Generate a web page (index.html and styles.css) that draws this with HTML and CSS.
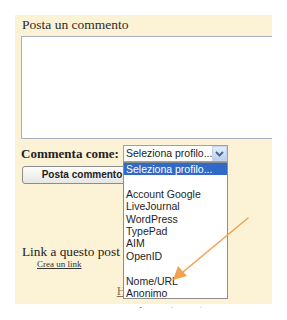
FILE: index.html
```html
<!DOCTYPE html>
<html>
<head>
<meta charset="utf-8">
<link rel="stylesheet" href="styles.css">
</head>
<body>
<div class="shot">
  <div class="panel">
    <div class="title">Posta un commento</div>
    <div class="textarea"></div>
    <div class="as-row">
      <span class="as-label">Commenta come:</span>
      <div class="select">
        <span class="select-text">Seleziona profilo...</span>
        <span class="select-btn">
          <svg width="9" height="6" viewBox="0 0 9 6"><path d="M1 1 L4.5 4.5 L8 1" fill="none" stroke="#4d6185" stroke-width="1.8"/></svg>
        </span>
      </div>
    </div>
    <div class="button">Posta commento</div>
    <div class="link-title">Link a questo post</div>
    <div class="link-create">Crea un link</div>
    <div class="home"><span>Home page</span></div>
  </div>
  <div class="subscribe">Iscriviti a: Commenti sul post (Atom)</div>

  <div class="dropdown">
    <div class="opt selected">Seleziona profilo...</div>
    <div class="opt"></div>
    <div class="opt">Account Google</div>
    <div class="opt">LiveJournal</div>
    <div class="opt">WordPress</div>
    <div class="opt">TypePad</div>
    <div class="opt">AIM</div>
    <div class="opt">OpenID</div>
    <div class="opt"></div>
    <div class="opt">Nome/URL</div>
    <div class="opt">Anonimo</div>
  </div>

  <svg class="arrow" width="90" height="80" viewBox="0 0 90 80">
    <line x1="78" y1="3" x2="13" y2="57" stroke="#f4a24f" stroke-width="1.6" stroke-linecap="round"/>
    <polygon points="3,65 8,51 17,61" fill="#f4a24f"/>
  </svg>
</div>
</body>
</html>
```
FILE: styles.css
```css
html, body {
  margin: 0;
  padding: 0;
  background: #ffffff;
}

.shot {
  position: relative;
  margin: 15px 0 0 15px;
  width: 257px;
  height: 293px;
  overflow: hidden;
}

.panel {
  background: #fcf2d6;
  height: 289px;
  padding: 0 0 0 6px;
  box-sizing: border-box;
  overflow: hidden;
  font-family: "Liberation Serif", "DejaVu Serif", serif;
  color: #2b2b2b;
}

.title {
  padding-top: 2px;
  font-size: 13.5px;
  line-height: 16px;
  padding-left: 1px;
}

.textarea {
  margin-top: 3px;
  width: 262px;
  height: 103px;
  box-sizing: border-box;
  border: 1px solid #a7b0ba;
  background: #ffffff;
}

.as-row {
  display: flex;
  align-items: center;
  margin-top: 6px;
  height: 17px;
}

.as-label {
  width: 102px;
  font-weight: bold;
  font-size: 13px;
  color: #222;
  white-space: nowrap;
  padding-top: 1px;
}

.select {
  display: flex;
  width: 105px;
  height: 17px;
  box-sizing: border-box;
  border: 1px solid #8ea5c2;
  background: #fff;
}

.select-text {
  flex: 1;
  font-family: "Liberation Sans", Arial, sans-serif;
  font-size: 10.5px;
  line-height: 15px;
  color: #222;
  padding-left: 2px;
  white-space: nowrap;
  overflow: hidden;
}

.select-btn {
  width: 15px;
  display: flex;
  align-items: center;
  justify-content: center;
  background: linear-gradient(#e4efff, #b9d0f3);
  border: 1px solid #c3d3ef;
  box-sizing: border-box;
}

.button {
  margin-top: 4px;
  margin-left: 1px;
  width: 120px;
  height: 18px;
  box-sizing: border-box;
  border: 1px solid #8c8c8c;
  border-radius: 3px;
  background: linear-gradient(#fdfdfd, #e6e6e6);
  font-family: "Liberation Sans", Arial, sans-serif;
  font-weight: bold;
  font-size: 10px;
  line-height: 16px;
  text-align: center;
  color: #222;
}

.link-title {
  margin-top: 60px;
  font-size: 13.3px;
  line-height: 15px;
  padding-left: 1px;
  color: #222;
}

.link-create {
  margin-left: 16px;
  font-size: 9px;
  line-height: 10px;
  text-decoration: underline;
  color: #333;
}

.home {
  margin-top: 14px;
  text-align: center;
  font-size: 13px;
  line-height: 16px;
}

.home span {
  color: #857455;
  text-decoration: underline;
}

.subscribe {
  padding-left: 8px;
  margin-top: 1px;
  font-family: "Liberation Serif", "DejaVu Serif", serif;
  font-size: 12px;
  line-height: 14px;
  color: #555;
  white-space: nowrap;
}

.dropdown {
  position: absolute;
  left: 108px;
  top: 147px;
  width: 105px;
  height: 137px;
  box-sizing: border-box;
  border: 1px solid #8d8d8d;
  background: #fff;
  font-family: "Liberation Sans", Arial, sans-serif;
  font-size: 10.5px;
  color: #1e1e1e;
}

.opt {
  height: 12.4px;
  line-height: 12.4px;
  padding-left: 2px;
  white-space: nowrap;
}

.opt.selected {
  background: #3169c6;
  color: #fff;
}

.arrow {
  position: absolute;
  left: 155px;
  top: 200px;
}
```
